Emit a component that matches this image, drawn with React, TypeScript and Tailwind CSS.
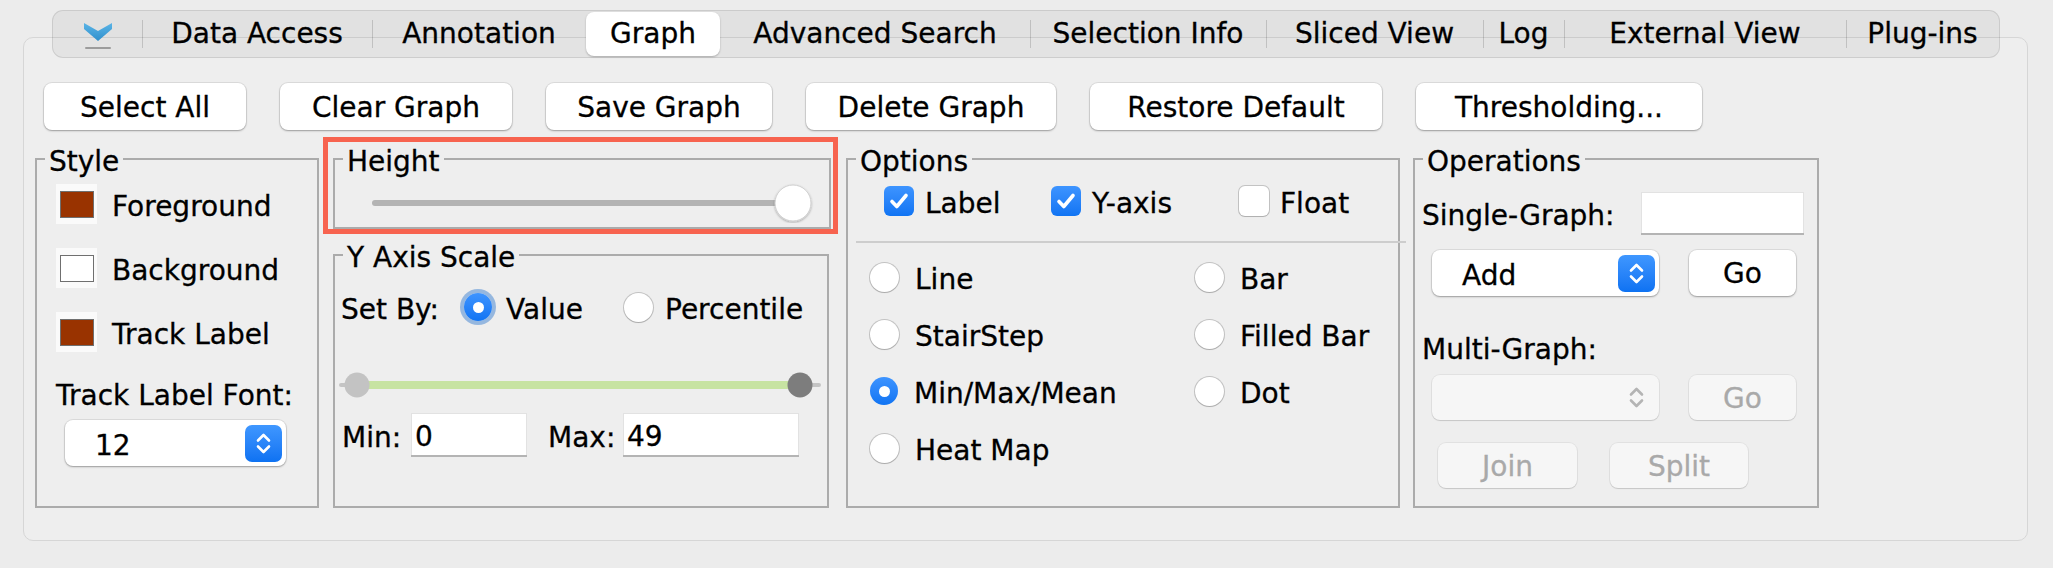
import type { ReactNode } from 'react';

const tabs = [
  { label: 'Data Access', w: 'w-[230px]', sep: true },
  { label: 'Annotation', w: 'w-[214px]', sep: true },
  { label: 'Graph', w: 'w-[134px]', active: true },
  { label: 'Advanced Search', w: 'w-[310px]' },
  { label: 'Selection Info', w: 'w-[236px]', sep: true },
  { label: 'Sliced View', w: 'w-[217px]', sep: true },
  { label: 'Log', w: 'w-[81px]', sep: true },
  { label: 'External View', w: 'w-[282px]', sep: true },
  { label: 'Plug-ins', w: 'w-[153px]', sep: true },
];

// label text sits a little low next to its control, like the native baseline
const txt = 'leading-none mt-[5px]';

function PushButton({ children, className = '', disabled = false }: { children: ReactNode; className?: string; disabled?: boolean }) {
  return (
    <button
      className={`flex items-center justify-center rounded-[8px] pt-[2px] leading-none ${
        disabled
          ? 'bg-[#f6f6f6] text-[#a9a9a9] shadow-[0_1px_1px_rgba(0,0,0,0.12),0_0_0_1px_rgba(0,0,0,0.05)]'
          : 'bg-white text-black shadow-[0_1px_2px_rgba(0,0,0,0.3),0_0_0_1px_rgba(0,0,0,0.07)]'
      } ${className}`}
    >
      {children}
    </button>
  );
}

function Stepper({ disabled = false }: { disabled?: boolean }) {
  const color = disabled ? '#b4b4b4' : '#ffffff';
  return (
    <span
      className={`flex h-[37px] w-[37px] items-center justify-center rounded-[7px] ${
        disabled ? '' : 'bg-gradient-to-b from-[#3f97ff] to-[#0d72f2]'
      }`}
    >
      <svg width="37" height="37" viewBox="0 0 37 37" fill="none" stroke={color} strokeWidth="2.6" strokeLinecap="round" strokeLinejoin="round">
        <path d="M13 15.5 L18.5 10 L24 15.5" />
        <path d="M13 21.5 L18.5 27 L24 21.5" />
      </svg>
    </span>
  );
}

function Dropdown({ value, className = '', disabled = false }: { value?: string; className?: string; disabled?: boolean }) {
  return (
    <div
      className={`flex items-center justify-between rounded-[8px] pr-[4px] ${
        disabled
          ? 'bg-[#f6f6f6] shadow-[0_1px_1px_rgba(0,0,0,0.12),0_0_0_1px_rgba(0,0,0,0.05)]'
          : 'bg-white shadow-[0_1px_2px_rgba(0,0,0,0.3),0_0_0_1px_rgba(0,0,0,0.07)]'
      } ${className}`}
    >
      <span className={`pl-[30px] ${txt}`}>{value}</span>
      <Stepper disabled={disabled} />
    </div>
  );
}

function Radio({ checked = false, focused = false }: { checked?: boolean; focused?: boolean }) {
  if (checked) {
    return (
      <span
        className={`flex h-[28px] w-[28px] shrink-0 items-center justify-center rounded-full bg-gradient-to-b from-[#3d94ff] to-[#0f74f3] ${
          focused ? 'ring-[4px] ring-[#6f9fd8]/70' : ''
        }`}
      >
        <span className="h-[11px] w-[11px] rounded-full bg-white" />
      </span>
    );
  }
  return <span className="h-[29px] w-[29px] shrink-0 rounded-full bg-white shadow-[0_0_0_1px_rgba(0,0,0,0.18),0_1px_1px_rgba(0,0,0,0.12)]" />;
}

function Checkbox({ checked = false }: { checked?: boolean }) {
  if (!checked) {
    return <span className="h-[30px] w-[30px] shrink-0 rounded-[6px] bg-white shadow-[0_0_0_1px_rgba(0,0,0,0.18),0_1px_1px_rgba(0,0,0,0.1)]" />;
  }
  return (
    <span className="flex h-[30px] w-[30px] shrink-0 items-center justify-center rounded-[6px] bg-gradient-to-b from-[#3d94ff] to-[#0f74f3]">
      <svg width="30" height="30" viewBox="0 0 30 30" fill="none" stroke="#fff" strokeWidth="3.6" strokeLinecap="round" strokeLinejoin="round">
        <path d="M8 15.5 L12.8 20.5 L22 9.5" />
      </svg>
    </span>
  );
}

function ColorWell({ color }: { color: string }) {
  return (
    <span className="flex h-[40px] w-[41px] shrink-0 items-center justify-center bg-[#fafafa]">
      <span className="h-[27px] w-[34px] border border-[#6f6f6f]" style={{ backgroundColor: color }} />
    </span>
  );
}

function Group({ title, className = '', children }: { title: string; className?: string; children?: ReactNode }) {
  return (
    <fieldset className={`m-0 min-w-0 shrink-0 border-2 border-[#ababab] p-0 ${className}`}>
      <legend className="ml-[8px] px-[4px] leading-[32px]">
        <span className="relative top-[3px]">{title}</span>
      </legend>
      {children}
    </fieldset>
  );
}

function TextField({ value = '', className = '' }: { value?: string; className?: string }) {
  return (
    <div className={`flex items-center bg-white pl-[4px] pt-[4px] leading-none shadow-[inset_0_-2px_0_#b4b4b4,inset_0_0_0_1px_#e2e2e2] ${className}`}>
      {value}
    </div>
  );
}

export default function App() {
  return (
    <div className="h-[568px] w-[2053px] overflow-hidden bg-[#ececec] pt-[10px] pl-[23px] font-['DejaVu_Sans',sans-serif] text-[28px] text-black [-webkit-text-stroke:0.3px_currentColor]">
      {/* segmented tab bar */}
      <div className="relative z-10 ml-[29px] flex h-[48px] w-[1948px] items-center rounded-[11px] border border-black/10 bg-black/[0.045]">
        <div className="flex w-[89px] flex-col items-center justify-center gap-[6px] pt-[4px]">
          <svg width="28" height="18" viewBox="0 0 28 18">
            <defs>
              <linearGradient id="chev" x1="0" y1="0" x2="0" y2="1">
                <stop offset="0" stopColor="#5ab4e6" />
                <stop offset="1" stopColor="#2f8fcc" />
              </linearGradient>
            </defs>
            <polygon points="0,0 14,8 28,0 28,6 14,18 0,6" fill="url(#chev)" />
          </svg>
          <span className="h-[2px] w-[26px] rounded-full bg-[#9c9c9c]" />
        </div>
        {tabs.map((t) =>
          t.active ? (
            <div
              key={t.label}
              className={`${t.w} flex h-[44px] items-center justify-center rounded-[8px] bg-white leading-none shadow-[0_1px_2px_rgba(0,0,0,0.25)]`}
            >
              {t.label}
            </div>
          ) : (
            <div key={t.label} className={`${t.w} relative flex h-full items-center justify-center leading-none`}>
              {t.sep && <span className="absolute left-0 top-[9px] h-[28px] w-px bg-black/15" />}
              {t.label}
            </div>
          )
        )}
      </div>

      {/* panel */}
      <div className="-mt-[21px] h-[504px] w-[2005px] rounded-[10px] border border-[#d6d6d6] bg-[#eeeeee]">
        <div className="mt-[45px] flex gap-[34px] pl-[20px]">
          <PushButton className="h-[47px] w-[202px]">Select All</PushButton>
          <PushButton className="h-[47px] w-[232px]">Clear Graph</PushButton>
          <PushButton className="h-[47px] w-[226px]">Save Graph</PushButton>
          <PushButton className="h-[47px] w-[250px]">Delete Graph</PushButton>
          <PushButton className="h-[47px] w-[292px]">Restore Default</PushButton>
          <PushButton className="h-[47px] w-[286px]">Thresholding...</PushButton>
        </div>

        <div className="mt-[7px] flex items-start pl-[11px]">
          {/* Style */}
          <Group title="Style" className="mt-[6px] h-[365px] w-[284px]">
            <div className="flex flex-col pl-[19px] pt-[9px]">
              {[
                ['Foreground', '#993300'],
                ['Background', '#ffffff'],
                ['Track Label', '#993300'],
              ].map(([label, color], i) => (
                <div key={label} className={`flex h-[40px] items-center gap-[15px] ${i > 0 ? 'mt-[24px]' : ''}`}>
                  <ColorWell color={color} />
                  <span className={txt}>{label}</span>
                </div>
              ))}
              <div className="mt-[28px] leading-[32px]">Track Label Font:</div>
              <Dropdown value="12" className="ml-[9px] mt-[8px] h-[46px] w-[221px]" />
            </div>
          </Group>

          {/* Height + Y Axis Scale */}
          <div className="ml-[4px] flex w-[515px] flex-col">
            <div className="h-[97px] w-[515px] border-[5px] border-[#f7634f] pl-[5px] pt-[1px]">
              <Group title="Height" className="h-[86px] w-[498px]">
                <div className="pt-[8px]">
                  <svg width="494" height="40" viewBox="0 0 494 40">
                    <defs>
                      <filter id="knob" x="-30%" y="-30%" width="160%" height="160%">
                        <feDropShadow dx="0" dy="1" stdDeviation="1" floodColor="#000" floodOpacity="0.3" />
                      </filter>
                    </defs>
                    <line x1="40" y1="20" x2="452" y2="20" stroke="#b3b3b3" strokeWidth="6" strokeLinecap="round" />
                    <circle cx="458" cy="20" r="18" fill="#fff" stroke="#cfcfcf" strokeWidth="1" filter="url(#knob)" />
                  </svg>
                </div>
              </Group>
            </div>

            <Group title="Y Axis Scale" className="ml-[10px] mt-[5px] h-[269px] w-[496px]">
              <div className="mt-[20px] flex h-[32px] items-center pl-[6px]">
                <span className={`w-[123px] ${txt}`}>Set By:</span>
                <Radio checked focused />
                <span className={`ml-[14px] w-[118px] ${txt}`}>Value</span>
                <Radio />
                <span className={`ml-[12px] ${txt}`}>Percentile</span>
              </div>
              <div className="mt-[47px]">
                <svg width="492" height="30" viewBox="0 0 492 30">
                  <line x1="6" y1="15" x2="484" y2="15" stroke="#c4c4c4" strokeWidth="4" strokeLinecap="round" />
                  <line x1="22" y1="15" x2="465" y2="15" stroke="#c7e3a2" strokeWidth="8" />
                  <circle cx="22" cy="15" r="12.5" fill="#c3c3c3" />
                  <circle cx="465" cy="15" r="12.5" fill="#7d7d7d" />
                </svg>
              </div>
              <div className="mt-[13px] flex h-[44px] items-center pl-[7px]">
                <span className={`w-[69px] ${txt}`}>Min:</span>
                <TextField value="0" className="h-[44px] w-[116px]" />
                <span className={`ml-[21px] w-[75px] ${txt}`}>Max:</span>
                <TextField value="49" className="h-[44px] w-[176px]" />
              </div>
            </Group>
          </div>

          {/* Options */}
          <Group title="Options" className="ml-[8px] mt-[6px] h-[365px] w-[554px]">
            <div className="mt-[11px] flex h-[30px] items-center pl-[36px]">
              <div className="flex w-[167px] items-center gap-[11px]">
                <Checkbox checked />
                <span className={txt}>Label</span>
              </div>
              <div className="flex w-[188px] items-center gap-[11px]">
                <Checkbox checked />
                <span className={txt}>Y-axis</span>
              </div>
              <div className="flex items-center gap-[11px]">
                <Checkbox />
                <span className={txt}>Float</span>
              </div>
            </div>
            <div className="ml-[8px] mt-[25px] h-[2px] w-[550px] bg-[#cdcdcd]" />
            <div className="mt-[18px] grid grid-cols-[325px_1fr] gap-y-[25px] pl-[22px]">
              {[
                ['Line', false],
                ['Bar', false],
                ['StairStep', false],
                ['Filled Bar', false],
                ['Min/Max/Mean', true],
                ['Dot', false],
                ['Heat Map', false],
              ].map(([label, on]) => (
                <div key={label as string} className="flex h-[32px] items-center gap-[16px]">
                  <Radio checked={on as boolean} />
                  <span className={txt}>{label}</span>
                </div>
              ))}
            </div>
          </Group>

          {/* Operations */}
          <Group title="Operations" className="ml-[13px] mt-[6px] h-[365px] w-[406px]">
            <div className="mt-[17px] flex items-center pl-[7px]">
              <span className={`w-[219px] ${txt}`}>Single-Graph:</span>
              <TextField className="h-[43px] w-[163px]" />
            </div>
            <div className="ml-[17px] mt-[15px] flex items-center gap-[30px]">
              <Dropdown value="Add" className="h-[46px] w-[227px]" />
              <PushButton className="h-[46px] w-[107px]">Go</PushButton>
            </div>
            <div className="mt-[38px] pl-[7px] leading-[32px]">Multi-Graph:</div>
            <div className="ml-[17px] mt-[9px] flex items-center gap-[30px]">
              <Dropdown disabled className="h-[45px] w-[227px]" />
              <PushButton disabled className="h-[45px] w-[107px]">Go</PushButton>
            </div>
            <div className="ml-[23px] mt-[23px] flex items-center gap-[33px]">
              <PushButton disabled className="h-[45px] w-[139px]">Join</PushButton>
              <PushButton disabled className="h-[45px] w-[138px]">Split</PushButton>
            </div>
          </Group>
        </div>
      </div>
    </div>
  );
}
